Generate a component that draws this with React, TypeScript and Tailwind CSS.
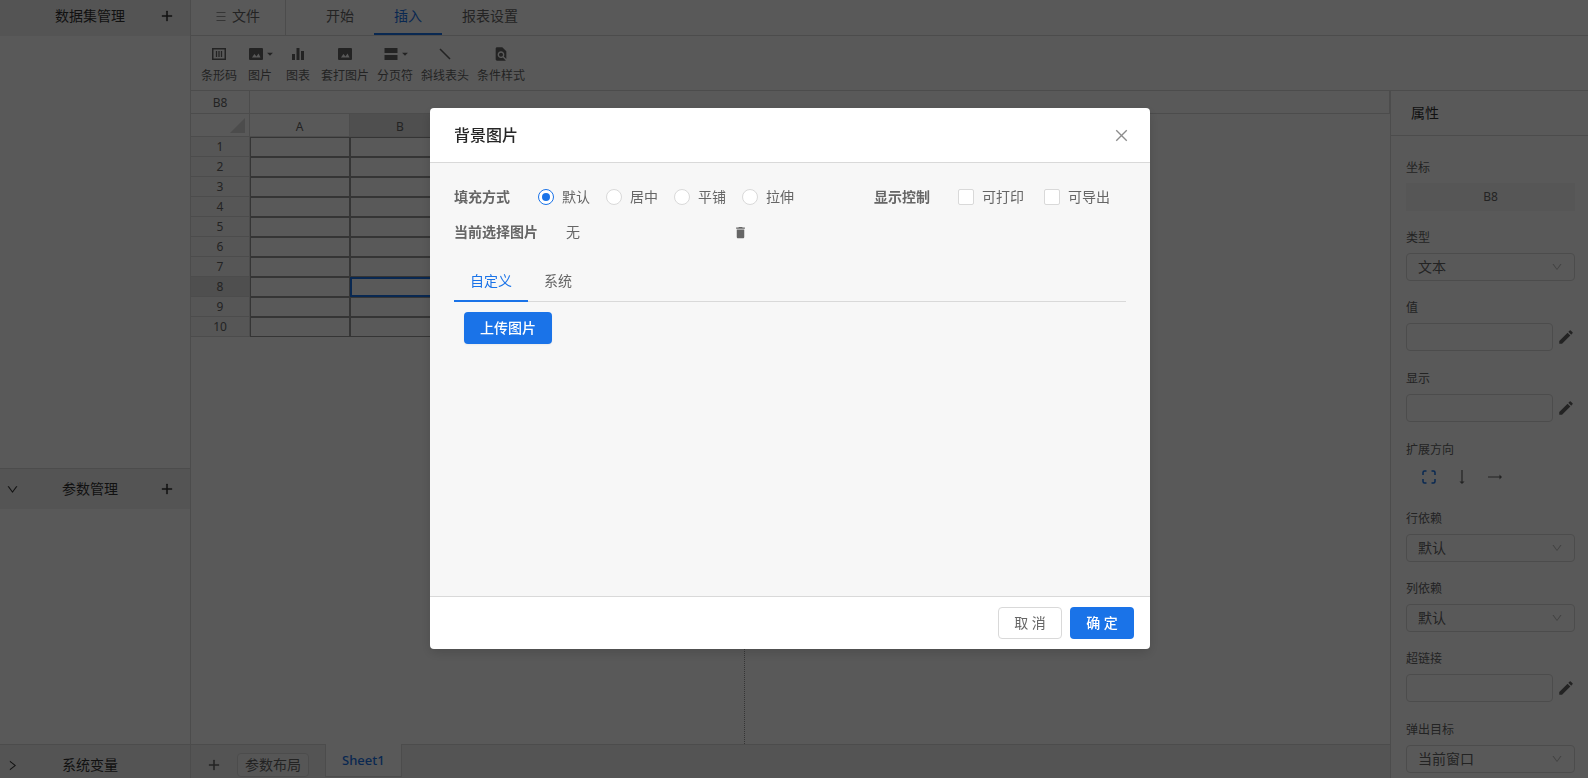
import { useState } from "react";
import type { ReactNode } from "react";
import { AiOutlineClose, AiOutlineDown, AiOutlinePlus, AiOutlineRight } from "react-icons/ai";
import { MdArrowDropDown, MdDelete, MdEdit, MdFindInPage } from "react-icons/md";

const columns = ["A", "B"];
const rows = [1, 2, 3, 4, 5, 6, 7, 8, 9, 10];
const fillModes = ["默认", "居中", "平铺", "拉伸"];

function BarcodeIcon() {
  return (
    <svg width="14" height="12" viewBox="0 0 14 12" fill="none" stroke="currentColor">
      <rect x="0.75" y="0.75" width="12.5" height="10.5" strokeWidth="1.5" />
      <path d="M4.5 3v6M7 3v6M9.5 3v6" strokeWidth="1.3" />
    </svg>
  );
}

function PictureIcon() {
  return (
    <svg width="14" height="12" viewBox="0 0 14 12" fill="currentColor">
      <path fillRule="evenodd" d="M1 0h12a1 1 0 0 1 1 1v10a1 1 0 0 1-1 1H1a1 1 0 0 1-1-1V1a1 1 0 0 1 1-1zM3 9.500h8.500L9.500 5.500 7.500 8.500 5.400 6z" />
    </svg>
  );
}

function ChartIcon() {
  return (
    <svg width="14" height="14" viewBox="0 0 14 14" fill="currentColor">
      <path d="M1 7h3v6H1zM5.500 1h3v12h-3zM10 4h3v9h-3z" />
    </svg>
  );
}

function PageBreakIcon() {
  return (
    <svg width="14" height="12" viewBox="0 0 14 12" fill="currentColor">
      <path d="M0.500 0h13v5H0.500zM0.500 7h13v5H0.500z" />
    </svg>
  );
}

function SlashIcon() {
  return (
    <svg width="14" height="14" viewBox="0 0 14 14" stroke="currentColor" strokeWidth="1.600">
      <path d="M2 2l10 10" />
    </svg>
  );
}

function MenuIcon() {
  return (
    <svg width="10" height="10" viewBox="0 0 10 10" stroke="#999">
      <path d="M0.500 1.500h9M0.500 5.500h9M0.500 9.500h9" />
    </svg>
  );
}

function ExpandNoneIcon() {
  return (
    <svg width="14" height="14" viewBox="0 0 14 14" fill="none" stroke="currentColor" strokeWidth="1.500">
      <path d="M1 5V2.500A1.500 1.500 0 0 1 2.500 1H4.500M9.500 1h2A1.500 1.500 0 0 1 13 2.500V5M13 9v2.500a1.500 1.500 0 0 1-1.500 1.500h-2M4.500 13h-2A1.500 1.500 0 0 1 1 11.500V9" />
    </svg>
  );
}

function ExpandDownIcon() {
  return (
    <svg width="14" height="14" viewBox="0 0 14 14" fill="currentColor">
      <path d="M6.400 0h1.200v11.500h2L7 14l-2.600-2.500h2z" />
    </svg>
  );
}

function ExpandRightIcon() {
  return (
    <svg width="14" height="14" viewBox="0 0 14 14" fill="currentColor">
      <path d="M0 6.400v1.200h11.500v2L14 7l-2.500-2.600v2z" />
    </svg>
  );
}

const tools: { name: string; icon: ReactNode; menu?: boolean }[] = [
  { name: "条形码", icon: <BarcodeIcon /> },
  { name: "图片", icon: <PictureIcon />, menu: true },
  { name: "图表", icon: <ChartIcon /> },
  { name: "套打图片", icon: <PictureIcon /> },
  { name: "分页符", icon: <PageBreakIcon />, menu: true },
  { name: "斜线表头", icon: <SlashIcon /> },
  { name: "条件样式", icon: <MdFindInPage size={16} /> },
];

function SideHeader({ title, icon, add }: { title: string; icon?: ReactNode; add?: boolean }) {
  return (
    <div className="flex h-10 items-center bg-[#f0f0f0] text-[#333]">
      <span className="flex w-6 justify-center">{icon}</span>
      <h2 className="flex-1 text-center text-sm">{title}</h2>
      <div className="flex w-[34px] pl-1">
        {add && (
          <button aria-label={`添加${title}`}>
            <AiOutlinePlus size={14} strokeWidth={40} />
          </button>
        )}
      </div>
    </div>
  );
}

function Sidebar() {
  return (
    <aside className="flex w-[191px] shrink-0 flex-col overflow-hidden border-r border-[#d9d9d9]">
      <div className="h-9 shrink-0 overflow-hidden bg-[#f0f0f0]">
        <div className="-mt-1">
          <SideHeader title="数据集管理" add />
        </div>
      </div>
      <div className="flex-1" />
      <div className="shrink-0 border-t border-[#d9d9d9]">
        <SideHeader title="参数管理" icon={<AiOutlineDown size={13} />} add />
      </div>
      <div className="h-[235px] shrink-0" />
      <div className="h-[34px] shrink-0 overflow-hidden border-t border-[#d9d9d9]">
        <SideHeader title="系统变量" icon={<AiOutlineRight size={13} />} />
      </div>
    </aside>
  );
}

function MenuBar() {
  return (
    <nav className="flex h-9 shrink-0 border-b border-[#d9d9d9] text-sm leading-8 text-[#666]">
      <button className="mr-5 flex w-[95px] items-center justify-center gap-1.5 border-r border-[#d9d9d9] pb-1 leading-8">
        <MenuIcon />
        文件
      </button>
      <button className="px-5 pb-1 leading-8">开始</button>
      <button className="border-b-2 border-[#1a73e8] px-5 pb-0.5 leading-8 text-[#1a73e8]">插入</button>
      <button className="px-5 pb-1 leading-8">报表设置</button>
    </nav>
  );
}

function Toolbar() {
  return (
    <div className="flex h-[55px] shrink-0 gap-2 border-b border-[#d9d9d9] pt-2.5 pl-2.5 text-xs text-[#666]">
      {tools.map((tool) => (
        <button key={tool.name} className="flex min-w-[30px] flex-col items-center">
          <span className="flex h-4 items-center">
            {tool.icon}
            {tool.menu && <MdArrowDropDown size={14} className="-mr-1.5" />}
          </span>
          <span className="mt-1 leading-5">{tool.name}</span>
        </button>
      ))}
    </div>
  );
}

function Sheet() {
  return (
    <div className="relative flex-1 overflow-hidden">
      <table className="w-[259px] table-fixed border-separate border-spacing-0 text-xs text-[#666]">
        <thead>
          <tr className="h-[23px]">
            <th className="w-[59px] border-r border-b border-[#d9d9d9] p-0">
              <svg width="15" height="15" viewBox="0 0 15 15" className="ml-auto mr-1" fill="#d9d9d9">
                <path d="M15 0v15H0z" />
              </svg>
            </th>
            {columns.map((column) => (
              <th
                key={column}
                className={
                  column === "B"
                    ? "border-b border-[#d9d9d9] bg-[#e1e1e1] p-0 pt-1 font-normal"
                    : "border-r border-b border-[#d9d9d9] p-0 pt-1 font-normal"
                }
              >
                {column}
              </th>
            ))}
          </tr>
        </thead>
        <tbody>
          {rows.map((row) => (
            <tr key={row} className="h-5">
              <th
                className={
                  row === 8
                    ? "border-r border-b border-[#d9d9d9] bg-[#e1e1e1] p-0 font-normal"
                    : "border-r border-b border-[#d9d9d9] bg-[#f7f7f7] p-0 font-normal"
                }
              >
                {row}
              </th>
              {columns.map((column) => (
                <td
                  key={column}
                  className={row === 8 && column === "B" ? "border-2 border-[#1a73e8] p-0" : "border border-[#999] p-0"}
                />
              ))}
            </tr>
          ))}
        </tbody>
      </table>
      {/* page boundary */}
      <div className="absolute inset-y-0 left-[553px] border-l border-dotted border-[#999]" />
    </div>
  );
}

function SheetBar() {
  return (
    <footer className="flex h-[34px] shrink-0 border-t border-[#d9d9d9] bg-[#f0f0f0] text-sm text-[#666]">
      <button aria-label="添加工作表" className="mt-3 ml-4 h-4">
        <AiOutlinePlus size={14} strokeWidth={40} />
      </button>
      <button className="mt-2 ml-4 h-6 rounded border border-[#d9d9d9] bg-[#f7f7f7] px-[7px] leading-[22px]">参数布局</button>
      <button className="-mt-px ml-4 h-[33px] border-x border-b border-[#d9d9d9] bg-white px-4 text-[13px] font-medium text-[#1a73e8]">
        Sheet1
      </button>
    </footer>
  );
}

function Field({ label, id, children }: { label: string; id: string; children: ReactNode }) {
  return (
    <div className="mb-4">
      <label htmlFor={id} className="mb-1 block text-xs leading-[22px] text-[#666]">
        {label}
      </label>
      {children}
    </div>
  );
}

function SelectField({ label, id, value }: { label: string; id: string; value: string }) {
  return (
    <Field label={label} id={id}>
      <div className="relative">
        <select id={id} className="block h-7 w-full appearance-none rounded border border-[#d9d9d9] pl-[11px] text-sm text-[#666]">
          <option>{value}</option>
        </select>
        <AiOutlineDown size={12} className="pointer-events-none absolute top-2 right-3 text-[#bfbfbf]" />
      </div>
    </Field>
  );
}

function InputField({ label, id }: { label: string; id: string }) {
  return (
    <Field label={label} id={id}>
      <div className="flex h-[29px] gap-1">
        <input id={id} type="text" className="h-7 min-w-0 flex-1 rounded border border-[#d9d9d9]" />
        <button aria-label={`编辑${label}`} className="h-7 text-[#666]">
          <MdEdit size={18} />
        </button>
      </div>
    </Field>
  );
}

function Properties() {
  return (
    <aside className="w-[198px] shrink-0 overflow-hidden border-l border-[#d9d9d9]">
      <h2 className="h-[45px] border-b border-[#d9d9d9] pl-5 text-sm leading-[44px] text-[#333]">属性</h2>
      <div className="pt-[21px] pr-[13px] pl-[15px]">
        <Field label="坐标" id="coord">
          <output id="coord" className="block h-7 bg-[#f7f7f7] text-center text-xs leading-7 text-[#666]">
            B8
          </output>
        </Field>
        <SelectField label="类型" id="type" value="文本" />
        <InputField label="值" id="value" />
        <InputField label="显示" id="display" />
        <Field label="扩展方向" id="expand-none">
          <div className="flex h-[27px] gap-[19px] pl-4 text-[#666]">
            <button id="expand-none" aria-label="不扩展" className="h-6 text-[#1a73e8]">
              <ExpandNoneIcon />
            </button>
            <button aria-label="向下扩展" className="h-6">
              <ExpandDownIcon />
            </button>
            <button aria-label="向右扩展" className="h-6">
              <ExpandRightIcon />
            </button>
          </div>
        </Field>
        <SelectField label="行依赖" id="row-parent" value="默认" />
        <SelectField label="列依赖" id="col-parent" value="默认" />
        <InputField label="超链接" id="link" />
        <SelectField label="弹出目标" id="target" value="当前窗口" />
      </div>
    </aside>
  );
}

function BackgroundDialog() {
  const [mode, setMode] = useState("默认");

  return (
    <div
      role="dialog"
      aria-label="背景图片"
      className="w-[720px] rounded bg-white text-sm text-[#666] shadow-[0_4px_12px_rgba(0,0,0,0.15)]"
    >
      <header className="flex h-[55px] items-center justify-between border-b border-[#d9d9d9] pr-5 pl-6">
        <h1 className="text-base font-medium text-[#262626]">背景图片</h1>
        <button aria-label="关闭" className="pt-px text-[#8c8c8c]">
          <AiOutlineClose size={17} />
        </button>
      </header>

      <div className="h-[433px] bg-[#f7f7f7] px-6 pt-[23px]">
        <div className="flex h-[22px] items-center">
          <span className="mr-7 font-bold">填充方式</span>
          <div className="flex gap-4">
            {fillModes.map((item) => (
              <label key={item} className="flex items-center gap-2">
                <input
                  type="radio"
                  name="fill"
                  checked={mode === item}
                  onChange={() => setMode(item)}
                  className="grid size-4 appearance-none place-items-center rounded-full border border-[#d9d9d9] bg-white before:size-2 before:rounded-full checked:border-[#1a73e8] checked:before:bg-[#1a73e8]"
                />
                {item}
              </label>
            ))}
          </div>
          <span className="mr-7 ml-20 font-bold">显示控制</span>
          <div className="flex gap-5">
            {["可打印", "可导出"].map((item) => (
              <label key={item} className="flex items-center gap-2">
                <input type="checkbox" className="size-4 appearance-none rounded-xs border border-[#d9d9d9] bg-white checked:bg-[#1a73e8]" />
                {item}
              </label>
            ))}
          </div>
        </div>

        <div className="mt-[13px] flex h-[22px] items-center">
          <span className="mr-7 font-bold">当前选择图片</span>
          <span className="w-[167px]">无</span>
          <button aria-label="删除图片">
            <MdDelete size={15} />
          </button>
        </div>

        <div role="tablist" className="mt-4 flex border-b border-[#d9d9d9]">
          <button role="tab" aria-selected="true" className="-mb-px h-[43px] border-b-2 border-[#1a73e8] px-4 pt-0.5 text-[#1a73e8]">
            自定义
          </button>
          <button role="tab" aria-selected="false" className="h-[42px] px-4 pt-0.5">
            系统
          </button>
        </div>

        <button className="mt-2.5 ml-2.5 h-8 rounded bg-[#1a73e8] px-4 font-medium text-white shadow-xs">上传图片</button>
      </div>

      <footer className="flex justify-end gap-2 border-t border-[#d9d9d9] px-4 py-2.5">
        <button className="h-8 w-16 rounded border border-[#d9d9d9] bg-white">取 消</button>
        <button className="h-8 w-16 rounded bg-[#1a73e8] font-medium text-white">确 定</button>
      </footer>
    </div>
  );
}

export default function App() {
  return (
    <div className="flex h-screen overflow-hidden bg-white font-['Noto_Sans','Noto_Sans_CJK_SC',sans-serif]">
      <Sidebar />
      <div className="flex min-w-0 flex-1 flex-col">
        <MenuBar />
        <Toolbar />
        <div className="flex min-h-0 flex-1">
          <main className="flex min-w-0 flex-1 flex-col">
            <div className="flex h-[23px] shrink-0 border-r border-b border-[#d9d9d9] text-xs leading-6 text-[#666]">
              <span className="w-[59px] border-r border-[#d9d9d9] text-center">B8</span>
              <input aria-label="单元格内容" className="min-w-0 flex-1" />
            </div>
            <Sheet />
            <SheetBar />
          </main>
          <Properties />
        </div>
      </div>

      <div className="fixed inset-0 flex items-start justify-center bg-black/65 pt-[108px] pr-2">
        <BackgroundDialog />
      </div>
    </div>
  );
}
